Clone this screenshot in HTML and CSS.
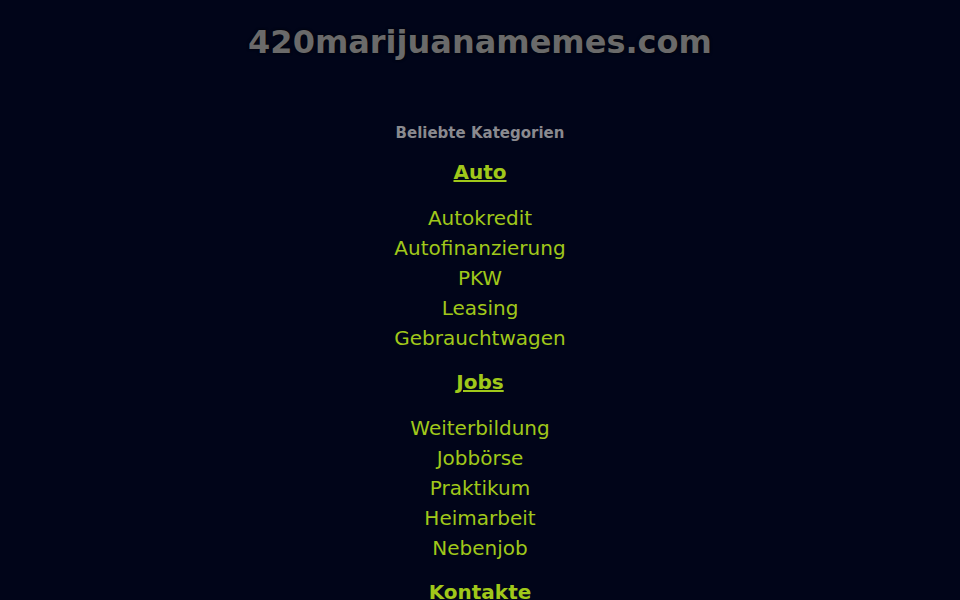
FILE: index.html
```html
<!DOCTYPE html>
<html lang="de">
<head>
  <meta charset="utf-8">
  <title>420marijuanamemes.com</title>
  <link rel="stylesheet" href="styles.css">
</head>
<body>
  <div class="header">
    <h1>420marijuanamemes.com</h1>
  </div>

  <div class="categories">
    <h2>Beliebte Kategorien</h2>

    <div class="group">
      <a class="group-title" href="#">Auto</a>
      <ul>
        <li><a href="#">Autokredit</a></li>
        <li><a href="#">Autofinanzierung</a></li>
        <li><a href="#">PKW</a></li>
        <li><a href="#">Leasing</a></li>
        <li><a href="#">Gebrauchtwagen</a></li>
      </ul>
    </div>

    <div class="group">
      <a class="group-title" href="#">Jobs</a>
      <ul>
        <li><a href="#">Weiterbildung</a></li>
        <li><a href="#">Jobbörse</a></li>
        <li><a href="#">Praktikum</a></li>
        <li><a href="#">Heimarbeit</a></li>
        <li><a href="#">Nebenjob</a></li>
      </ul>
    </div>

    <div class="group">
      <a class="group-title" href="#">Kontakte</a>
      <ul>
        <li><a href="#">Partnersuche</a></li>
        <li><a href="#">Singles</a></li>
      </ul>
    </div>
  </div>
</body>
</html>
```

FILE: styles.css
```css
body {
  margin: 0;
  background-color: #010519;
  font-family: "DejaVu Sans", sans-serif;
  text-align: center;
}

.header {
  padding-top: 21px;
}

.header h1 {
  margin: 0;
  font-size: 32px;
  line-height: 42px;
  color: #6a6a6a;
  text-shadow: 0 0 3px #000;
}

.categories {
  padding-top: 60px;
}

.categories h2 {
  margin: 0 0 14px;
  font-size: 15px;
  line-height: 20px;
  color: #8a8a8f;
}

.group {
  margin-bottom: 14px;
}

.group-title {
  display: inline-block;
  font-size: 20px;
  font-weight: bold;
  line-height: 30px;
  color: #a0c81a;
  text-decoration: underline;
}

.group ul {
  list-style: none;
  margin: 0;
  padding: 16px 0 0;
}

.group li {
  font-size: 20px;
  line-height: 30px;
}

.group li a {
  color: #a0c81a;
  text-decoration: none;
}
```
